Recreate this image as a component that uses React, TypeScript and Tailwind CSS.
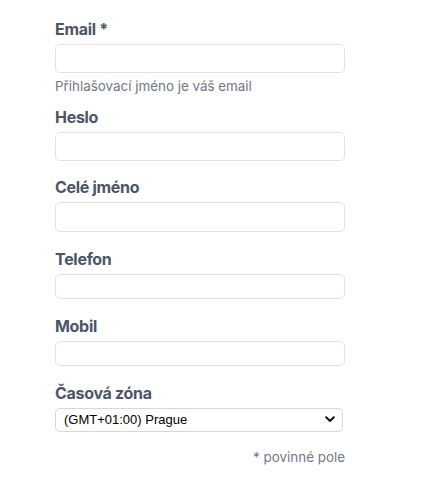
import React from "react";

const labelCls =
  "block text-[16px] leading-5 font-bold tracking-[-0.3px] text-[#4a5568] mb-[5px]";
const inputCls =
  "block w-full border border-[#dfe2e6] rounded-[5px] bg-white px-2 outline-none";

function Field({
  label,
  h,
  type = "text",
  className = "",
}: {
  label: string;
  h: string;
  type?: string;
  className?: string;
}) {
  return (
    <div className={className}>
      <label className={labelCls}>{label}</label>
      <input type={type} className={`${inputCls} ${h}`} />
    </div>
  );
}

export default function App() {
  return (
    <div
      className="w-[425px] h-[493px] bg-white"
      style={{ fontFamily: "Inter, 'Noto Sans', sans-serif" }}
    >
      <form className="ml-[55px] w-[290px] pt-[19px]">
        <div>
          <label className={labelCls}>Email *</label>
          <input type="email" className={`${inputCls} h-[29px]`} />
          <p className="mt-[4px] text-[13.4px] leading-[18px] text-[#6f7784]">
            Přihlašovací jméno je váš email
          </p>
        </div>
        <Field label="Heslo" h="h-[29px]" type="password" className="mt-[12px]" />
        <Field label="Celé jméno" h="h-[30px]" className="mt-[16px]" />
        <Field label="Telefon" h="h-[25px]" className="mt-[17px]" />
        <Field label="Mobil" h="h-[25px]" className="mt-[17px]" />
        <div className="mt-[17px]">
          <label className={labelCls}>Časová zóna</label>
          <div className="relative">
            <select
              className="block w-[288px] h-[24px] appearance-none border border-[#d4d7dc] rounded-[5px] bg-white pl-[8px] pr-6 text-[13px] text-black outline-none"
              style={{ fontFamily: "'Liberation Sans', Arial, sans-serif" }}
              defaultValue="prague"
            >
              <option value="prague">(GMT+01:00) Prague</option>
            </select>
            <svg
              className="pointer-events-none absolute right-[10px] top-[8px]"
              width="10"
              height="7"
              viewBox="0 0 10 7"
              fill="none"
            >
              <path
                d="M1.2 1.3 L5 5 L8.8 1.3"
                stroke="#111"
                strokeWidth="2"
                strokeLinecap="round"
                strokeLinejoin="round"
              />
            </svg>
          </div>
        </div>
        <p className="mt-[16px] text-right text-[13.4px] leading-[18px] text-[#6f7784]">
          * povinné pole
        </p>
      </form>
    </div>
  );
}
